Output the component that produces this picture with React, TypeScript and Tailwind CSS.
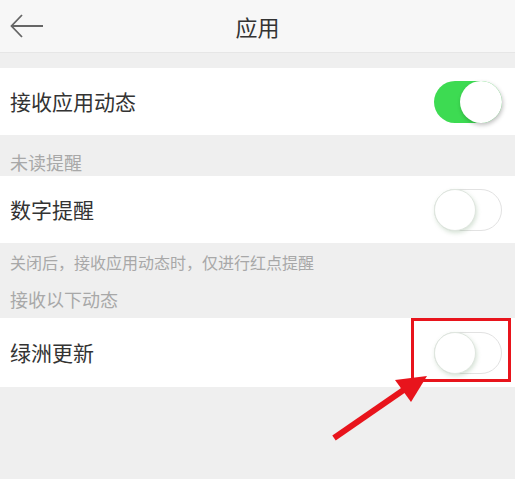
import React from "react"

const font = { fontFamily: '"Noto Sans CJK SC", "Noto Sans", sans-serif' }

function Toggle({ on }: { on: boolean }) {
    if (on) {
        return (
            <div className="relative h-[42px] w-[68px] rounded-full bg-[#3ddb52]">
                <div className="absolute right-0 top-0 h-[42px] w-[42px] rounded-full bg-white shadow-[1px_2px_4px_rgba(0,0,0,0.25)]" />
            </div>
        )
    }
    return (
        <div className="relative h-[42px] w-[68px] rounded-full border border-[#e2e2e2] bg-white">
            <div className="absolute -left-px -top-px h-[42px] w-[42px] rounded-full border border-[#dfe6df] bg-white shadow-[1px_2px_4px_rgba(120,160,120,0.3)]" />
        </div>
    )
}

function Row({ label, on, tall }: { label: string; on: boolean; tall?: boolean }) {
    return (
        <div className={"flex items-center justify-between bg-white pl-[10px] pr-[13px] " + (tall ? "h-[69px]" : "h-[67px]")}>
            <span className="text-[21px] text-[#333]">{label}</span>
            <Toggle on={on} />
        </div>
    )
}

export default function App() {
    return (
        <div className="relative h-[479px] w-[515px] overflow-hidden bg-[#efefef]" style={font}>
            <header className="relative flex h-[53px] items-center justify-center border-b border-[#e6e6e6] bg-[#f7f7f7]">
                <svg className="absolute left-[10px] top-[14px]" width="34" height="24" viewBox="0 0 34 24" fill="none" stroke="#666" strokeWidth="1.8">
                    <path d="M33 12H2M12 1L1.5 12L12 23" />
                </svg>
                <span className="text-[22px] text-[#333]">应用</span>
            </header>

            <div className="h-[15px]" />
            <Row label="接收应用动态" on={true} />

            <div className="flex h-[41px] items-end px-[10px] pb-[2px] text-[18px] leading-[24px] text-[#a8a8a8]">未读提醒</div>
            <Row label="数字提醒" on={false} />

            <div className="flex h-[38px] items-center px-[10px] text-[16px] text-[#a8a8a8]">关闭后，接收应用动态时，仅进行红点提醒</div>
            <div className="flex h-[37px] items-center px-[10px] text-[18px] text-[#a8a8a8]">接收以下动态</div>
            <Row label="绿洲更新" on={false} tall />

            {/* annotation */}
            <div className="absolute left-[411px] top-[318px] h-[64px] w-[100px] border-[3px] border-[#e8141c]" />
            <svg className="absolute left-0 top-0" width="515" height="479" viewBox="0 0 515 479">
                <line x1="334" y1="438" x2="405" y2="389" stroke="#e8141c" strokeWidth="6" />
                <polygon points="427,376 395,380 411,402" fill="#e8141c" />
            </svg>
        </div>
    )
}
